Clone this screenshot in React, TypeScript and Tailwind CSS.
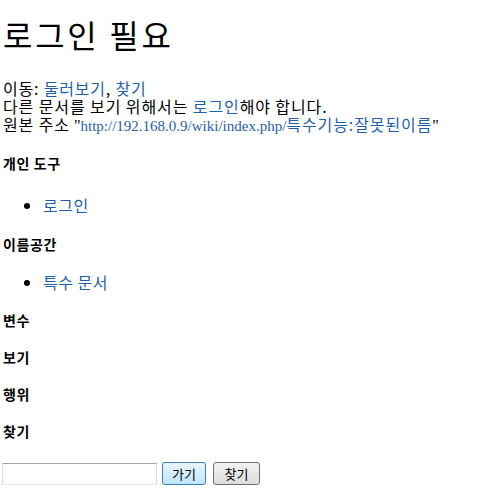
const kr = "font-['Noto_Sans_CJK_KR',sans-serif]";

const Heading = ({ children, className = '' }: { children: React.ReactNode; className?: string }) => (
  <h5 className={`text-[14px] font-bold leading-[16px] tracking-[0.6px] text-black ${kr} ${className}`}>
    {children}
  </h5>
);

const Link = ({ children }: { children: React.ReactNode }) => (
  <a href="#" className="text-[#1f5fa8]">
    {children}
  </a>
);

export default function App() {
  return (
    <div className="min-h-[499px] bg-white pl-[3px] text-black font-['Liberation_Serif','Noto_Sans_CJK_KR',serif]">
      <h1 className={`pt-[16px] text-[32px] font-normal leading-[36px] tracking-[2.7px] ${kr}`}>로그인 필요</h1>

      <div className="mt-[27px] text-[16px] leading-[18px]">
        <div className={`tracking-[0.8px] ${kr}`}>
          이동: <Link>둘러보기</Link>, <Link>찾기</Link>
        </div>
        <p className={`tracking-[0.9px] ${kr}`}>
          다른 문서를 보기 위해서는 <Link>로그인</Link>해야 합니다.
        </p>
        <p>
          <span className={`tracking-[0.9px] ${kr}`}>원본 주소</span> "
          <a href="#" className="text-[15px] text-[#1f5fa8]">
            http://192.168.0.9/wiki/index.php/
            <span className={`text-[16px] tracking-[0.9px] ${kr}`}>특수기능:잘못된이름</span>
          </a>
          "
        </p>
      </div>

      <Heading className="mt-[20px]">개인 도구</Heading>
      <ul className={`mt-[25px] list-disc pl-[40px] text-[16px] leading-[18px] tracking-[0.5px] ${kr}`}>
        <li>
          <Link>로그인</Link>
        </li>
      </ul>

      <Heading className="mt-[22px]">이름공간</Heading>
      <ul className={`mt-[21px] list-disc pl-[40px] text-[16px] leading-[18px] tracking-[0.5px] ${kr}`}>
        <li>
          <Link>특수 문서</Link>
        </li>
      </ul>

      <Heading className="mt-[21px]">변수</Heading>
      <Heading className="mt-[21px]">보기</Heading>
      <Heading className="mt-[21px]">행위</Heading>
      <Heading className="mt-[21px]">찾기</Heading>

      <form className="mt-[23px] flex items-center" onSubmit={(e) => e.preventDefault()}>
        <input
          type="text"
          className="ml-[-1px] h-[22px] w-[155px] border border-[#dcdcdc] border-t-[#a5a5a5] border-b-[#e8e8e8] bg-white px-1 text-[13px] outline-none"
        />
        <button
          type="submit"
          className={`ml-[5px] h-[23px] w-[44px] rounded-[3px] border border-[#3c7fb1] bg-gradient-to-b from-[#eaf6fd] to-[#bee6fd] text-[13px] leading-none text-black ${kr}`}
        >
          가기
        </button>
        <button
          type="button"
          className={`ml-[7px] h-[23px] w-[47px] rounded-[3px] border border-[#707070] bg-gradient-to-b from-[#f2f2f2] to-[#dcdcdc] text-[13px] leading-none text-black ${kr}`}
        >
          찾기
        </button>
      </form>
    </div>
  );
}
